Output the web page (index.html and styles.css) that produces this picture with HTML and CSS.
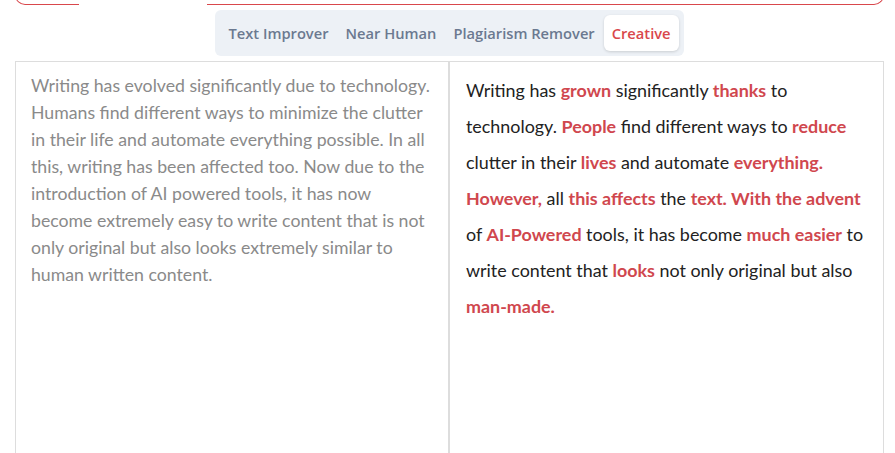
FILE: index.html
```html
<!DOCTYPE html>
<html lang="en">
<head>
    <meta charset="UTF-8">
    <title>Paraphraser modes</title>
    <meta name="viewport" content="width=device-width, initial-scale=1.0">
    <link rel="stylesheet" href="styles.css">
</head>
<body>

    <div class="page">
        <div class="input-box">
            <span class="input-gap"></span>
        </div>

        <nav class="modes">
            <button class="mode">Text Improver</button>
            <button class="mode">Near Human</button>
            <button class="mode">Plagiarism Remover</button>
            <button class="mode active">Creative</button>
        </nav>

        <div class="panels">
            <div class="panel original">
                <p>Writing has evolved significantly due to technology. Humans find different ways to minimize the clutter in their life and automate everything possible. In all this, writing has been affected too. Now due to the introduction of AI powered tools, it has now become extremely easy to write content that is not only original but also looks extremely similar to human written content.</p>
            </div>
            <div class="panel result">
                <p>Writing has <b>grown</b> significantly <b>thanks</b> to technology. <b>People</b> find different ways to <b>reduce</b> clutter in their <b>lives</b> and automate <b>everything.</b> <b>However,</b> all <b>this affects</b> the <b>text. With the advent</b> of <b>AI-Powered</b> tools, it has become <b>much easier</b> to write content that <b>looks</b> not only original but also <b>man-made.</b></p>
            </div>
        </div>
    </div>

</body>
</html>
```

FILE: styles.css
```css
body {
    margin: 0;
    background-color: white;
    font-family: Lato, "Open Sans", sans-serif;
    overflow: hidden;
}

.page {
    padding: 0 11px 0 15px;
}

/* the box above is scrolled out, only its bottom edge shows */
.input-box {
    position: relative;
    height: 40px;
    margin-top: -36px;
    border: 1px solid #d9474c;
    border-top: none;
    border-radius: 0 0 10px 10px;
}

.input-gap {
    position: absolute;
    left: 63px;
    bottom: -2px;
    width: 128px;
    height: 4px;
    background-color: white;
}

.modes {
    display: flex;
    gap: 1px;
    width: max-content;
    margin: 5px auto 0;
    padding: 5px;
    background-color: #edf1f6;
    border-radius: 6px;
}

.mode {
    height: 36px;
    padding: 0 8px;
    border: none;
    border-radius: 6px;
    background: none;
    font-family: "Open Sans", sans-serif;
    font-size: 14.7px;
    font-weight: 600;
    color: #6b7990;
    cursor: pointer;
}

.mode.active {
    background-color: white;
    color: #d9474c;
    box-shadow: 0 1px 3px rgba(0,0,0,0.15);
}

.panels {
    display: grid;
    grid-template-columns: 434px 1fr;
    margin-top: 5px;
    height: 420px;
    border: 1px solid #dddddd;
    border-bottom: none;
}

.panel p {
    margin: 0;
}

.original {
    padding: 10px 15px;
    border-right: 2px solid #dddddd;
}

.original p {
    font-size: 17.7px;
    line-height: 27px;
    color: #8a8a8a;
}

.result {
    padding: 10px 16px;
}

.result p {
    font-size: 17.9px;
    line-height: 36px;
    color: #222222;
}

.result b {
    font-weight: 700;
    color: #d0474e;
}
```
